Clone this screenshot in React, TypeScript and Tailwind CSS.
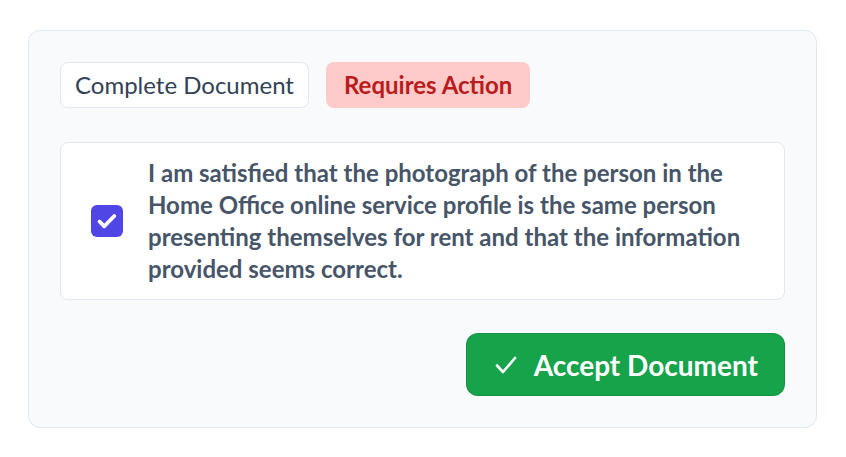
import { useState } from "react";

export default function App() {
  const [checked, setChecked] = useState(true);

  return (
    <div className="bg-white w-[846px] h-[457px] pt-[30px] pl-[28px] font-['Lato','Liberation_Sans',sans-serif]">
      <div className="w-[789px] h-[398px] bg-[#f8fafc] border border-[#e2e8f0] rounded-xl p-[31px] flex flex-col">
        <div className="flex items-center gap-[17px]">
          <span className="bg-white border border-[#e2e8f0] rounded-lg h-[46px] px-[14px] flex items-center text-[24px] text-[#334155]">
            Complete Document
          </span>
          <span className="bg-[#fecaca] rounded-lg h-[46px] px-[18px] flex items-center text-[24px] font-bold text-[#b91c1c]">
            Requires Action
          </span>
        </div>

        <label className="mt-[34px] bg-white border border-[#e2e8f0] rounded-lg h-[158px] flex items-center pl-[30px] pr-[30px] cursor-pointer">
          <button
            type="button"
            onClick={() => setChecked(!checked)}
            className={`size-[32px] shrink-0 rounded-md flex items-center justify-center ${
              checked ? "bg-[#4f46e5]" : "bg-white border border-[#cbd5e1]"
            }`}
          >
            {checked && (
              <svg viewBox="0 0 32 32" className="size-[32px]" fill="none" stroke="white" strokeWidth="3.8" strokeLinecap="round" strokeLinejoin="round">
                <path d="M8.5 16.5l4.8 4.8 10-10.3" />
              </svg>
            )}
          </button>
          <p className="ml-[25px] text-[24px] leading-[32px] font-bold text-[#475569]">
            I am satisfied that the photograph of the person in the Home Office online service profile is the same person presenting themselves for rent and that the information provided seems correct.
          </p>
        </label>

        <div className="mt-[33px] flex justify-end">
          <button
            type="button"
            className="h-[63px] pl-[27px] pr-[26px] bg-[#16a34a] border border-[#15803d]/50 rounded-xl flex items-center gap-[16px] text-white text-[28px] font-bold"
          >
            <svg viewBox="0 0 24 24" className="size-[24px]" fill="none" stroke="white" strokeWidth="2.6" strokeLinecap="round" strokeLinejoin="round">
              <path d="M3 12.5l6 6.5L21 5" />
            </svg>
            Accept Document
          </button>
        </div>
      </div>
    </div>
  );
}
